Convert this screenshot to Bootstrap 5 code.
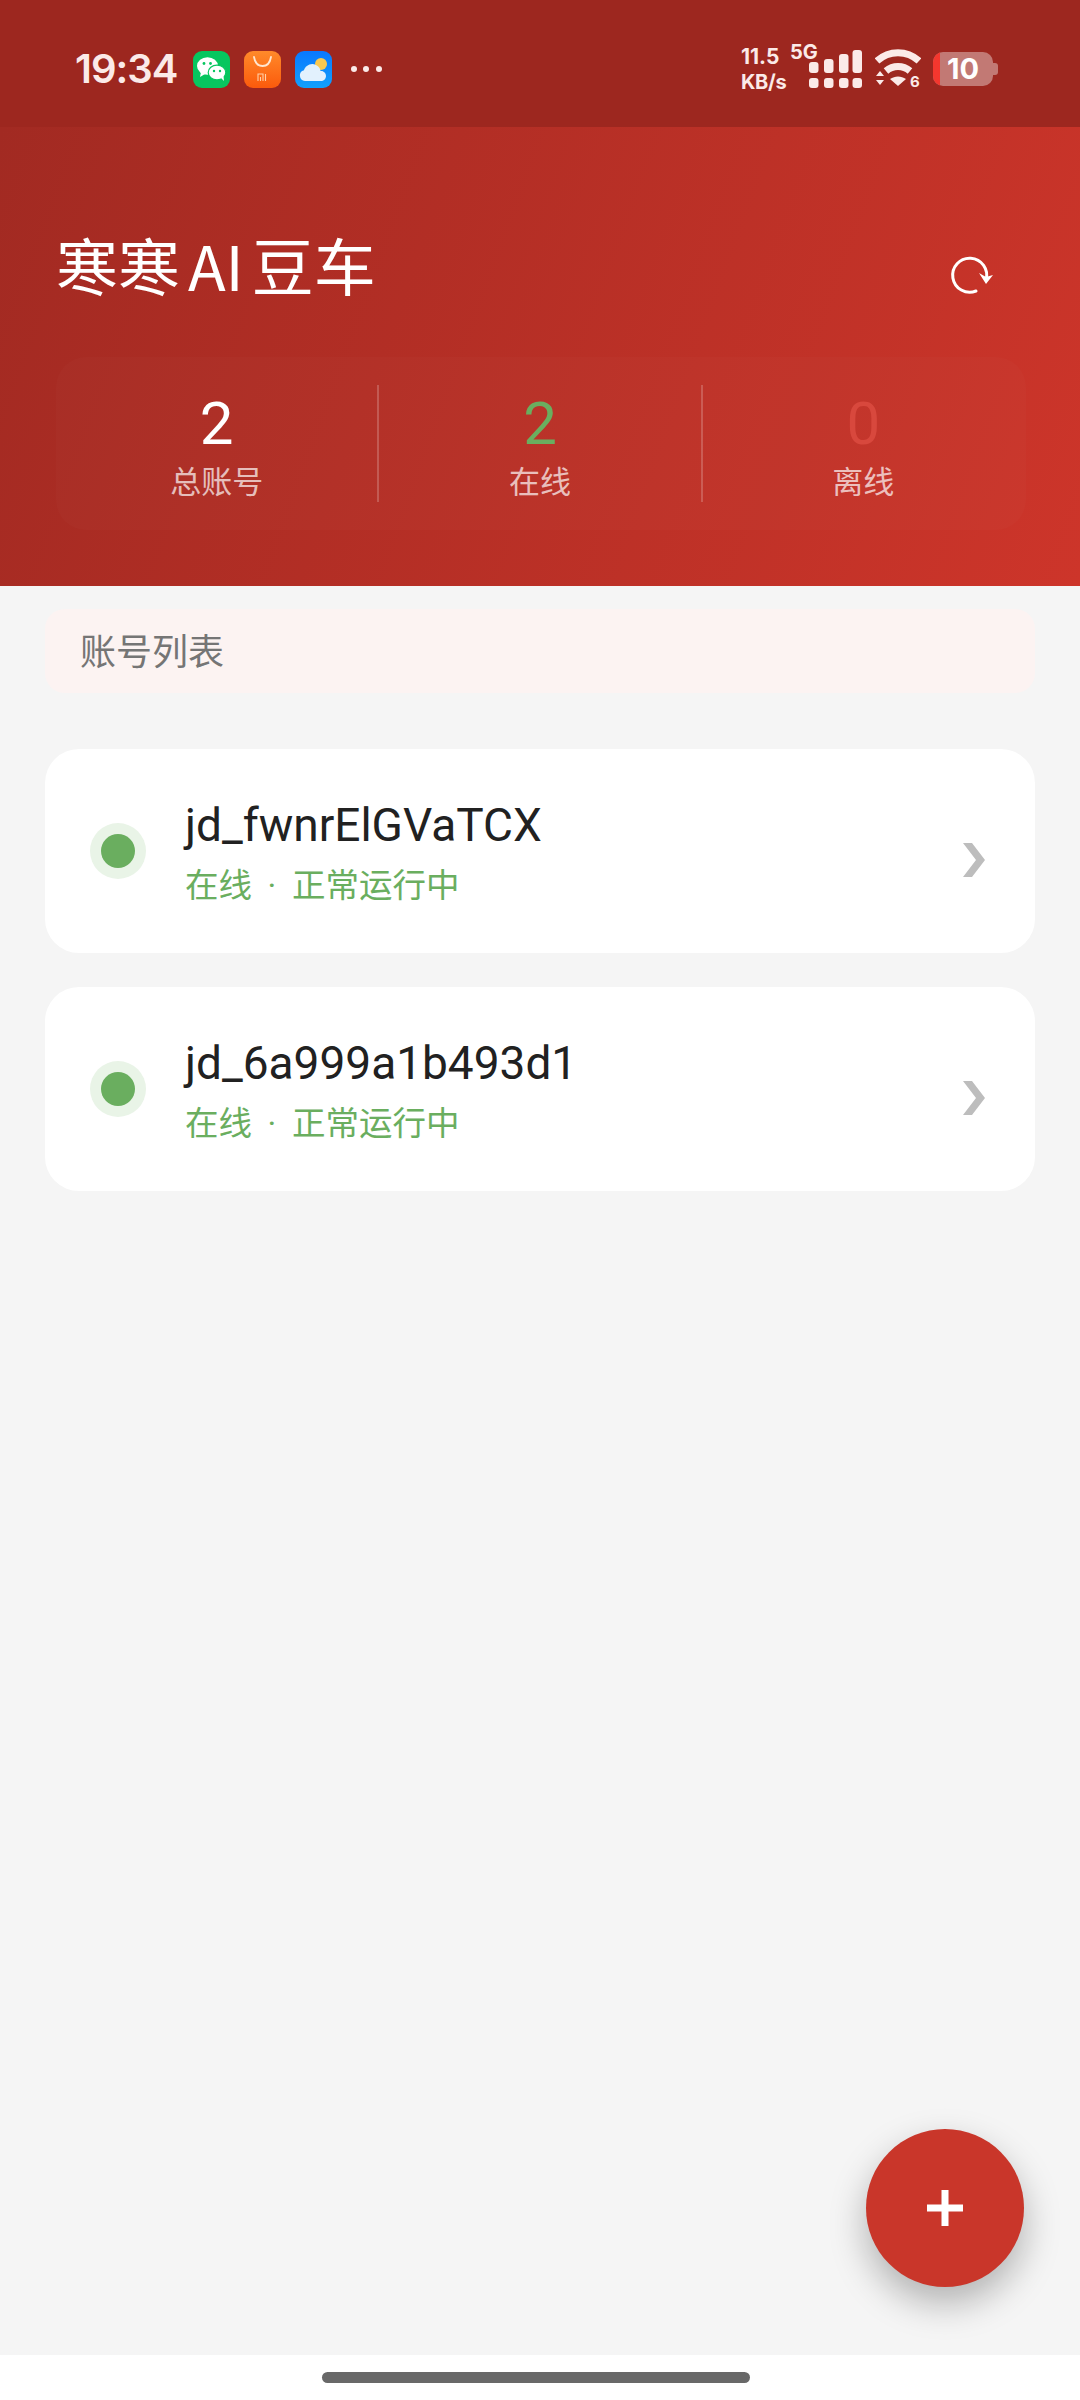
<!DOCTYPE html>
<html lang="zh">
<head>
    <meta charset="UTF-8">
    <meta name="viewport" content="width=device-width, initial-scale=1.0">
    <title>寒寒AI豆车</title>
    <link href="https://cdn.jsdelivr.net/npm/bootstrap@5.3.2/dist/css/bootstrap.min.css" rel="stylesheet">
    <style>
        html, body {
            height: 2400px;
            margin: 0;
            overflow: hidden;
        }
        body {
            font-family: "Noto Sans CJK SC", "Noto Sans", sans-serif;
            background: #f5f5f5;
        }
        .screen {
            position: relative;
            width: 1080px;
            height: 2400px;
        }
        .status-row {
            height: 127px;
            padding: 11px 82px 0 75px;
            background: #9d271f;
            color: #fbeae8;
        }
        .clock {
            font-family: Inter, sans-serif;
            font-size: 40px;
            font-weight: 600;
            letter-spacing: -1px;
            margin-right: 16px;
        }
        .notif-ico {
            width: 37px;
            height: 37px;
            margin-right: 14px;
            display: block;
        }
        .speed {
            font-family: Inter, sans-serif;
            font-weight: 700;
            line-height: 1;
            width: 49px;
            white-space: nowrap;
        }
        .speed-num { font-size: 21px; margin-bottom: 5px; }
        .speed-unit { font-size: 20px; letter-spacing: -.3px; }
        .net-wrap {
            position: relative;
            width: 72px;
            height: 51px;
        }
        .net-label {
            position: absolute;
            left: 0;
            top: -2px;
            font-family: Inter, sans-serif;
            font-size: 20px;
            font-weight: 700;
            line-height: 1;
        }
        .wifi-ico {
            display: block;
            margin-left: 13px;
        }
        .batt {
            position: relative;
            width: 65px;
            height: 34px;
            margin-left: 12px;
        }
        .batt-num {
            position: absolute;
            left: 10px;
            width: 40px;
            top: 0;
            text-align: center;
            font-family: Inter, sans-serif;
            font-size: 29px;
            font-weight: 700;
            line-height: 34px;
            color: #fff;
        }
        .hero {
            height: 459px;
            padding: 0 56px;
            background: linear-gradient(110deg, #a22a22 0%, #cd352a 100%);
        }
        .hero-top {
            height: 230px;
            padding-top: 94px;
        }
        .hero-title {
            font-size: 62px;
            font-weight: 400;
            line-height: 86px;
            word-spacing: -6px;
            color: #fff;
            margin: 0;
        }
        .refresh-btn {
            width: 44px;
            height: 44px;
            margin: 32px 30px 0 0;
        }
        .stat-box {
            width: 970px;
            height: 173px;
            border-radius: 30px;
            background: rgba(255, 255, 255, .015);
            padding: 28px 2px 28px 0;
        }
        .stat-cell {
            flex: 1 1 0;
            height: 117px;
            text-align: center;
            border-right: 2px solid rgba(255, 255, 255, .2);
        }
        .stat-cell:last-child { border-right: 0; }
        .stat-num {
            font-family: Roboto, sans-serif;
            font-size: 60px;
            line-height: 68px;
            margin-top: 5px;
            color: #fff;
        }
        .stat-label {
            font-size: 31px;
            line-height: 40px;
            margin-top: 2px;
            color: rgba(255, 255, 255, .7);
        }
        .num-on { color: #6aae5f; }
        .num-off { color: #d8483d; }
        .list-wrap {
            padding: 23px 45px 0;
        }
        .list-head {
            height: 84px;
            padding-left: 35px;
            margin-bottom: 56px;
            border-radius: 20px;
            background: #fcf3f2;
            color: #757575;
            font-size: 36px;
            line-height: 80px;
        }
        .acct-row {
            height: 204px;
            margin-bottom: 33px;
            padding: 0 50px 0 45px;
            border-radius: 34px;
            background: #fff;
        }
        .acct-row + .acct-row { margin-top: 34px; }
        .dot-ring {
            width: 56px;
            height: 56px;
            margin-right: 39px;
            border-radius: 50%;
            background: #e9f4e7;
        }
        .dot-core {
            width: 34px;
            height: 34px;
            border-radius: 50%;
            background: #6aae5f;
        }
        .acct-text { padding-top: 6px; }
        .acct-name {
            font-family: Roboto, sans-serif;
            font-size: 46px;
            line-height: 54px;
            color: #212121;
        }
        .acct-sub {
            font-size: 33.5px;
            line-height: 50px;
            margin-top: 6px;
            color: #6aae5f;
        }
        .sep-dot {
            display: inline-block;
            width: 40px;
            text-align: center;
            font-family: Roboto, sans-serif;
        }
        .acct-arrow {
            display: block;
            margin-top: 18px;
        }
        .foot-bar {
            position: absolute;
            left: 0;
            right: 0;
            bottom: 0;
            height: 45px;
            padding-left: 322px;
            background: #fff;
        }
        .home-pill {
            width: 428px;
            height: 11px;
            border-radius: 6px;
            background: #686868;
        }
        .fab-add {
            position: absolute;
            left: 866px;
            top: 2129px;
            width: 158px;
            height: 158px;
            padding: 0;
            border: 0;
            border-radius: 50%;
            background: #c9362a;
            box-shadow: 0 16px 36px rgba(0, 0, 0, .28);
        }
    </style>
</head>
<body>
    <div class="screen">
        <div class="status-row d-flex align-items-center">
            <span class="clock">19:34</span>
            <svg class="notif-ico" viewBox="0 0 37 37">
                <rect width="37" height="37" rx="9" fill="#07c65f"/>
                <ellipse cx="14.5" cy="15" rx="10.5" ry="8.8" fill="#fff"/>
                <path d="M8 21l-1 5 5-3z" fill="#fff"/>
                <ellipse cx="24" cy="21.5" rx="8.8" ry="7.4" fill="#fff" stroke="#07c65f" stroke-width="1.2"/>
                <path d="M28 27l3 3-.5-5z" fill="#fff"/>
                <circle cx="11" cy="12.5" r="1.4" fill="#07c65f"/>
                <circle cx="17.5" cy="12.5" r="1.4" fill="#07c65f"/>
                <circle cx="21" cy="20" r="1.2" fill="#07c65f"/>
                <circle cx="27" cy="20" r="1.2" fill="#07c65f"/>
            </svg>
            <svg class="notif-ico" viewBox="0 0 37 37">
                <defs><linearGradient id="shopBg" x1="0" y1="0" x2="0" y2="1"><stop offset="0" stop-color="#ff8a2a"/><stop offset="1" stop-color="#fb5a0c"/></linearGradient></defs>
                <rect width="37" height="37" rx="9" fill="url(#shopBg)"/>
                <path d="M10 6c1 6 4 9 8.500 9S26 12 27 6" fill="none" stroke="#ffe6cf" stroke-width="1.800" stroke-linecap="round"/>
                <path d="M14 30v-7h5v7M16.500 26v4M21.500 23v7" fill="none" stroke="#ffd0a8" stroke-width="1.100"/>
            </svg>
            <svg class="notif-ico" viewBox="0 0 37 37">
                <defs><linearGradient id="skyBg" x1="0" y1="0" x2="0" y2="1"><stop offset="0" stop-color="#0a78ff"/><stop offset="1" stop-color="#12a0fb"/></linearGradient></defs>
                <rect width="37" height="37" rx="9" fill="url(#skyBg)"/>
                <circle cx="26" cy="13" r="6" fill="#fbc94f"/>
                <path d="M10 30a5.500 5.500 0 0 1-1-10.800C10 15 16 11 21 14c3 1.500 4.500 4 4.500 6 3-.5 5.500 2 5.500 5s-2.500 5-5 5z" fill="#e2f1fd"/>
            </svg>
            <svg width="34" height="8" viewBox="0 0 34 8" class="ms-1"><circle cx="4" cy="4" r="3" fill="#fbeae8"/><circle cx="16" cy="4" r="3" fill="#fbeae8"/><circle cx="29" cy="4" r="3" fill="#fbeae8"/></svg>

            <div class="d-flex align-items-center ms-auto">
                <div class="speed">
                    <div class="speed-num">11.5</div>
                    <div class="speed-unit">KB/s</div>
                </div>
                <div class="net-wrap">
                    <span class="net-label">5G</span>
                    <svg width="72" height="51" viewBox="0 0 72 51" class="d-block">
                        <g fill="#fbeae8">
                            <rect x="19" y="18" width="9.500" height="11" rx="3"/>
                            <rect x="34" y="15" width="9.500" height="14" rx="3"/>
                            <rect x="49" y="10" width="9.500" height="19" rx="3"/>
                            <rect x="62.500" y="6" width="9.500" height="23" rx="3"/>
                            <rect x="19" y="34" width="9.500" height="10" rx="3"/>
                            <rect x="34" y="34" width="9.500" height="10" rx="3"/>
                            <rect x="49" y="34" width="9.500" height="10" rx="3"/>
                            <rect x="62.500" y="34" width="9.500" height="10" rx="3"/>
                        </g>
                    </svg>
                </div>
                <svg class="wifi-ico" width="46" height="46" viewBox="0 -4 46 46">
                    <path d="M2 11c12-11 30-11 42 0" fill="none" stroke="#fbeae8" stroke-width="7"/>
                    <path d="M11 21c7-6 17-6 24 0" fill="none" stroke="#fbeae8" stroke-width="7"/>
                    <path d="M15 29c5-3.500 11-3.500 16 0l-8 7z" fill="#fbeae8"/>
                    <path d="M5 21l4 5H1zM5 35l4-5H1z" fill="#fbeae8"/>
                    <text x="35" y="37" font-family="Inter, sans-serif" font-size="15" font-weight="700" fill="#fbeae8">6</text>
                </svg>
                <div class="batt">
                    <svg width="65" height="34" viewBox="0 0 65 34" class="d-block">
                        <defs><clipPath id="battClip"><rect width="60" height="34" rx="10"/></clipPath></defs>
                        <rect width="60" height="34" rx="10" fill="#fff" fill-opacity=".38"/>
                        <path d="M60 11h2a3 3 0 0 1 3 3v6a3 3 0 0 1-3 3h-2z" fill="#fff" fill-opacity=".38"/>
                        <rect width="7" height="34" fill="#f4372e" clip-path="url(#battClip)"/>
                    </svg>
                    <span class="batt-num">10</span>
                </div>
            </div>
        </div>

        <div class="hero">
            <div class="hero-top d-flex justify-content-between align-items-start">
                <h1 class="hero-title">寒寒 AI 豆车</h1>
                <div class="refresh-btn">
                    <svg width="44" height="44" viewBox="0 0 44 44" class="d-block">
                        <path d="M36 27A17 17 0 1 0 26 38" fill="none" stroke="#fff" stroke-width="3" stroke-linecap="round"/>
                        <path d="M29 20l7 11 7-9-7 2z" fill="#fff"/>
                    </svg>
                </div>
            </div>
            <div class="stat-box d-flex">
                <div class="stat-cell">
                    <div class="stat-num">2</div>
                    <div class="stat-label">总账号</div>
                </div>
                <div class="stat-cell">
                    <div class="stat-num num-on">2</div>
                    <div class="stat-label">在线</div>
                </div>
                <div class="stat-cell">
                    <div class="stat-num num-off">0</div>
                    <div class="stat-label">离线</div>
                </div>
            </div>
        </div>

        <div class="list-wrap">
            <div class="list-head">账号列表</div>
            <div class="acct-row d-flex align-items-center">
                <div class="dot-ring d-flex align-items-center justify-content-center"><div class="dot-core"></div></div>
                <div class="acct-text flex-grow-1">
                    <div class="acct-name">jd_fwnrElGVaTCX</div>
                    <div class="acct-sub">在线<span class="sep-dot">·</span>正常运行中</div>
                </div>
                <svg class="acct-arrow" width="22" height="34" viewBox="0 0 22 34"><path d="M0 0h9l13 17L9 34H0l13-17z" fill="#bdbdbd"/></svg>
            </div>
            <div class="acct-row d-flex align-items-center">
                <div class="dot-ring d-flex align-items-center justify-content-center"><div class="dot-core"></div></div>
                <div class="acct-text flex-grow-1">
                    <div class="acct-name">jd_6a999a1b493d1</div>
                    <div class="acct-sub">在线<span class="sep-dot">·</span>正常运行中</div>
                </div>
                <svg class="acct-arrow" width="22" height="34" viewBox="0 0 22 34"><path d="M0 0h9l13 17L9 34H0l13-17z" fill="#bdbdbd"/></svg>
            </div>
        </div>

        <button type="button" class="fab-add d-flex align-items-center justify-content-center" aria-label="添加">
            <svg width="36" height="36" viewBox="0 0 36 36" class="d-block"><path d="M18 0v36M0 18h36" stroke="#fff" stroke-width="7"/></svg>
        </button>

        <div class="foot-bar d-flex align-items-center">
            <div class="home-pill"></div>
        </div>
    </div>
    <script src="https://cdn.jsdelivr.net/npm/bootstrap@5.3.2/dist/js/bootstrap.bundle.min.js"></script>
</body>
</html>
